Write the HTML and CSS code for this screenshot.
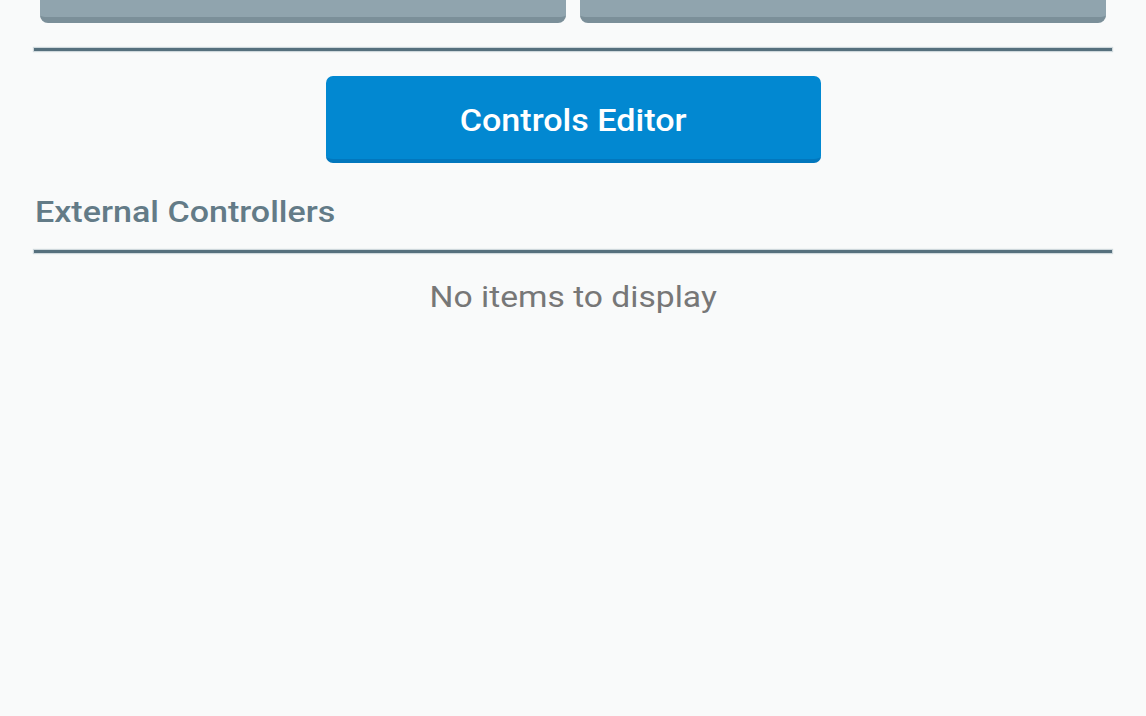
FILE: index.html
```html
<!doctype html>
<html>
    <head>
        <title>controls</title>
        <meta charset="UTF-8">
        <meta name="viewport" content="width=device-width, initial-scale=1">
        <link rel="stylesheet" href="styles.css">
    </head>
    <body>
      <div class="page">

        <div class="top-buttons">
          <button type="button" class="grey"></button>
          <button type="button" class="grey"></button>
        </div>

        <hr class="rule">

        <div class="editor-row">
          <button type="button" class="blue"><span class="wide">Controls Editor</span></button>
        </div>

        <h1><span class="wide left">External Controllers</span></h1>
        <hr class="rule">

        <p class="empty"><span class="wide">No items to display</span></p>

      </div>
    </body>
</html>
```

FILE: styles.css
```css
body {
    margin: 0;
    background: #f9fafa;
    font-family: Roboto, "Noto Sans", sans-serif;
    overflow: hidden;
}

.page {
    padding: 0 34px;
}

/* the screenshot is a little stretched sideways */
.wide {
    display: inline-block;
    transform: scaleX(1.12);
}

.wide.left {
    transform-origin: left center;
    transform: scaleX(1.135);
}

.top-buttons {
    display: flex;
    gap: 14px;
    padding: 0 6px;
    margin-top: -64px;
}

button {
    border: none;
    font-family: Roboto, sans-serif;
    font-weight: 500;
    cursor: pointer;
}

.grey {
    flex: 1;
    height: 87px;
    background: #90a4ae;
    border-radius: 8px;
    border-bottom: 6px solid #7b8f99;
}

.rule {
    border: none;
    height: 3px;
    background: #56707d;
    box-shadow: 0 0 1px 1px #cfd8dc;
    margin: 25px 0 0 0;
}

.editor-row {
    display: flex;
    justify-content: center;
    margin-top: 25px;
}

.blue {
    width: 495px;
    height: 87px;
    background: #0288d1;
    color: #ffffff;
    font-size: 31px;
    border-radius: 7px;
    border-bottom: 4px solid #0277bd;
    padding-top: 6px;
}

.blue .wide {
    transform: scaleX(1.1);
}

h1 {
    margin: 32px 0 0 1px;
    font-size: 30px;
    font-weight: 500;
    color: #637b87;
    line-height: 34px;
}

h1 + .rule {
    margin-top: 21px;
}

.empty {
    margin: 26px 0 0 0;
    text-align: center;
    font-size: 30px;
    color: #777777;
    line-height: 36px;
}
```
